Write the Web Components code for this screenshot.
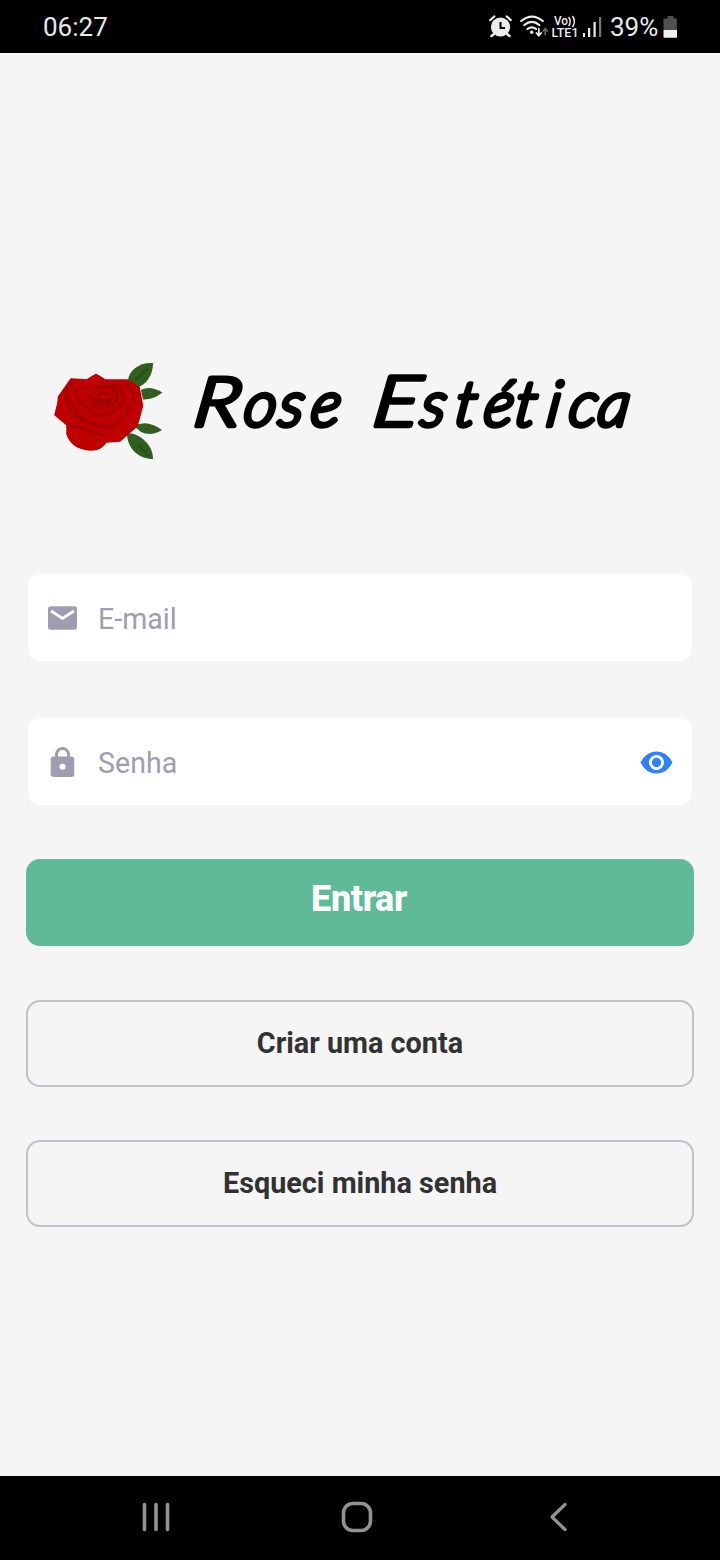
<!DOCTYPE html>
<html lang="pt-BR">
<head>
<meta charset="utf-8">
<title>Rose Estética</title>
<style>
html,body{margin:0;height:100%;background:#f5f5f5;font-family:Roboto,"Liberation Sans",sans-serif}
</style>
</head>
<body>
<login-app></login-app>
<script>
function define(name, html) {
  const template = document.createElement('template');
  template.innerHTML = html;
  customElements.define(name, class extends HTMLElement {
    constructor() {
      super();
      this.attachShadow({mode: 'open'}).append(template.content.cloneNode(true));
    }
  });
}

define('status-bar', `
<style>
:host{display:flex;align-items:center;justify-content:space-between;height:53px;background:#000;color:#e8e8e8;padding:0 42px 0 43px;box-sizing:border-box;font-size:26px;line-height:54px}
.right{display:flex;align-items:center}
svg{display:block}
.pct{margin-left:8px;width:53px}
</style>
<span>06:27</span>
<div class="right">
  <svg width="114" height="53" viewBox="488 0 114 53" fill="none" stroke="#ececec" stroke-linecap="round">
    <circle cx="500.500" cy="27" r="9.600" fill="#ececec" stroke="none"/>
    <path d="M494 34l-2.500 2M507 34l2.500 2" stroke-width="2.500"/>
    <path d="M490.300 20l4-3.500M510.700 20l-4-3.500" stroke-width="2.300"/>
    <path d="M500.500 22v6h4.500" stroke="#000" stroke-width="2" stroke-linecap="butt"/>
    <path d="M521.200 21q10.800-8.800 21.600 0M524.300 25q7.500-6.200 15 0M527.500 29q4.300-3.400 8.600 0" stroke-width="2.200"/>
    <circle cx="531.700" cy="32.300" r="1.700" fill="#ececec" stroke="none"/>
    <path d="M538.800 29v6.300M536.400 33l2.400 2.600 2.400-2.600" stroke-width="1.800"/>
    <path d="M545.200 34.500v-5.500M543 31l2.200-2.500 2.200 2.500" stroke="#666" stroke-width="1.700"/>
    <g fill="#ececec" stroke="none" font-family="Roboto" font-weight="500">
      <text x="554" y="25" font-size="12.500" textLength="14" lengthAdjust="spacingAndGlyphs">Vo</text>
      <text x="551.500" y="37" font-size="12.800" textLength="27" lengthAdjust="spacingAndGlyphs">LTE1</text>
    </g>
    <path d="M569 17.500q2.400 4 0 8M572.800 16.500q3.200 5 0 10" stroke-width="1.500"/>
    <g fill="#ececec" stroke="none"><path d="M583 33h2v4h-2zM588 28h2.200v9h-2.200zM593.500 22h2.200v15h-2.200z"/><path d="M599 17h2.200v20h-2.200z" fill="#777"/></g>
  </svg>
  <span class="pct">39%</span>
  <svg width="15" height="53" viewBox="0 0 15 53"><path d="M4.500 16h6v2.500h3.300v12H.500v-12h4z" fill="#505050"/><path d="M.500 30h13.500v7q0 .8-.8.8H1.300q-.8 0-.8-.8z" fill="#f0f0f0"/></svg>
</div>`);

define('brand-logo', `
<style>:host{display:block;height:130px}svg{display:block}</style>
<svg width="720" height="130" viewBox="0 346 720 130">
  <g fill="#305f20">
    <path d="M128 380C129 370 140 362 153 363C153 376 145 386 137 387Z"/>
    <path d="M141 390Q150 385 162.500 392.500Q153 400 143 399.500Z"/>
    <path d="M134 426Q147 419 162 430Q151 437 141 432Z"/>
    <path d="M127 433C139 433 153 444 153 459C139 459 127 449 127 433Z"/>
  </g>
  <path d="M136 380L148 368M138 445L150 457" stroke="#28521c" stroke-width="3"/>
  <path d="M71 379L87 380L96 374.500L105 380L127 380L139 387L142.500 406L137 426L120 441L106 442Q101 450 91 450Q72 449 67 434L67 425L55 415L58 403L58.500 397Z" fill="#bf0000" stroke="#bf0000" stroke-width="1.500" stroke-linejoin="round"/>
  <g fill="none" stroke="#a30001" stroke-width="2.800" stroke-linecap="round" stroke-linejoin="round">
    <path d="M73 383Q63 388 67 398Q72 404 76 410Q84 425 108 427Q117 426 121 419"/>
    <path d="M86 388L77 388Q74 396 83 405Q89 411 97 415Q108 418 116 410Q123 404 124 398L120 388Q115 383 108 385"/>
    <path d="M88 396Q92 408 105 407Q117 404 118 395Q115 387 107 386Q94 387 93 393"/>
    <ellipse cx="103" cy="397" rx="5.500" ry="3.700"/>
    <path d="M94 399Q98 404 107 403Q113 399 112 395M66 398Q67 408 76 417Q86 424 102 426M69 425Q83 429 104 435M127 384L134 395L133 403L128 408L125 417"/>
  </g>
  <text transform="translate(59.87 0) skewX(-8)" y="426" font-family="Lato" font-style="italic" font-size="63" font-weight="300" stroke="#000" stroke-width="4.700" stroke-linejoin="round" fill="#000" xml:space="preserve"><tspan x="192" font-size="68" textLength="46" lengthAdjust="spacingAndGlyphs">R</tspan><tspan x="242 277 309 350">ose </tspan><tspan x="371" font-size="70" textLength="46" lengthAdjust="spacingAndGlyphs">E</tspan><tspan x="419 453 482 513 545 567 596">stética</tspan></text>
</svg>`);

define('text-field', `
<style>
:host{display:flex;align-items:center;height:87.500px;margin:0 28px;padding:0 18px;box-sizing:border-box;border-radius:12px;background:#fff;color:#a09db2;font-size:28.600px}
.label{flex:1;margin-left:18px;padding-top:3px;line-height:34px}
::slotted(svg){display:block;margin-top:2px}
</style>
<slot name="icon"></slot><span class="label"><slot></slot></span><slot name="action"></slot>`);

define('app-button', `
<style>
:host{display:flex;align-items:center;justify-content:center;height:87px;margin:0 26px;padding-bottom:2px;box-sizing:border-box;border-radius:14px;border:2px solid #c1c1ce;color:#323232;font-size:28.800px;font-weight:700;line-height:34px}
:host([primary]){border:0;background:#5fba98;color:#fff;font-size:36px;line-height:42px;padding-bottom:7px;padding-right:2px;font-weight:800;letter-spacing:-.4px}
</style>
<span><slot></slot></span>`);

define('nav-bar', `
<style>:host{display:block;height:84px;background:#000}svg{display:block}</style>
<svg width="720" height="84" viewBox="0 1476 720 84" fill="none" stroke="#929292" stroke-width="3.600" stroke-linecap="round">
  <path d="M144.500 1504.500v25M156 1504.500v25M167.500 1504.500v25"/>
  <rect x="343.500" y="1503.500" width="27" height="27" rx="9.500"/>
  <path d="M565 1504.500L552 1517L565 1529.500" stroke-width="3.200" stroke-linejoin="round"/>
</svg>`);

define('login-app', `
<style>
:host{display:flex;flex-direction:column;height:1560px;background:#f5f5f5}
main{flex:1;display:flex;flex-direction:column}
brand-logo{margin-top:293px}
.fields{display:grid;gap:56.500px;margin-top:97.500px}
.actions{display:grid;gap:53px;margin-top:54px}
.actions app-button:first-child{margin-bottom:1px}
</style>
<status-bar></status-bar>
<main>
  <brand-logo></brand-logo>
  <div class="fields">
    <text-field>
      <svg slot="icon" width="34" height="34" viewBox="0 0 34 34"><path d="M5 5.200H28.500Q31 5.200 31 8V26Q31 28.700 28.500 28.700H5Q2 28.700 2 26V8Q2 5.200 5 5.200Z" fill="#a09db2"/><path d="M5 10L16.500 17.500L28 10" fill="none" stroke="#fff" stroke-width="2.700"/></svg>E-mail
    </text-field>
    <text-field>
      <svg slot="icon" width="34" height="34" viewBox="0 0 34 34"><path d="M10.500 12V9.500a6 6 0 0 1 12 0V12" fill="none" stroke="#a09db2" stroke-width="3"/><rect x="4.700" y="11.500" width="23.600" height="20.500" rx="3" fill="#a09db2"/><circle cx="16.500" cy="21.800" r="3" fill="#fff"/></svg>Senha
      <svg slot="action" width="36" height="34" viewBox="0 0 36 34"><path d="M2.500 17.500Q8 6.500 18.500 6.500T34.500 17.500Q29 28.500 18.500 28.500T2.500 17.500Z" fill="#2e80ff"/><circle cx="18.500" cy="17.500" r="6.100" fill="#2e80ff" stroke="#fff" stroke-width="2.900"/></svg>
    </text-field>
  </div>
  <div class="actions">
    <app-button primary>Entrar</app-button>
    <app-button>Criar uma conta</app-button>
    <app-button>Esqueci minha senha</app-button>
  </div>
</main>
<nav-bar></nav-bar>`);
</script>
</body>
</html>
